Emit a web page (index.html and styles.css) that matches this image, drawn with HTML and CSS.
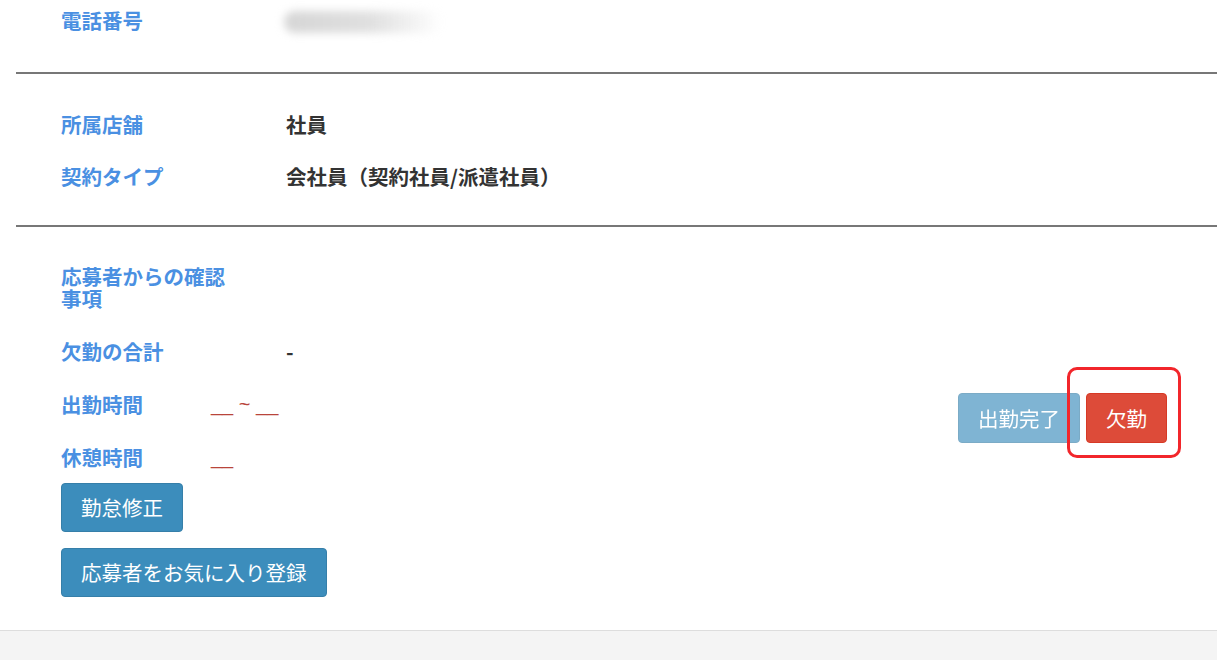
FILE: index.html
```html
<!DOCTYPE html>
<html lang="ja">
<head>
<meta charset="utf-8">
<title>応募者詳細</title>
<link rel="stylesheet" href="styles.css">
</head>
<body>
<div class="page">
  <section class="sec sec-top">
    <div class="row">
      <div class="lbl">電話番号</div>
      <div class="val"><span class="redacted"></span></div>
    </div>
  </section>
  <div class="divider"></div>
  <section class="sec sec-mid">
    <div class="row">
      <div class="lbl">所属店舗</div>
      <div class="val">社員</div>
    </div>
    <div class="row">
      <div class="lbl">契約タイプ</div>
      <div class="val">会社員（契約社員/派遣社員）</div>
    </div>
  </section>
  <div class="divider"></div>
  <section class="sec sec-bottom">
    <div class="col-left">
      <div class="row">
        <div class="lbl lbl-wrap">応募者からの確認事項</div>
        <div class="val"></div>
      </div>
      <div class="row">
        <div class="lbl">欠勤の合計</div>
        <div class="val">-</div>
      </div>
      <div class="row row-time">
        <div class="lbl">出勤時間</div>
        <div class="time">__ ~ __</div>
      </div>
      <div class="row row-time">
        <div class="lbl">休憩時間</div>
        <div class="time">__</div>
      </div>
      <div class="left-actions">
        <button class="btn btn-primary">勤怠修正</button>
        <button class="btn btn-primary">応募者をお気に入り登録</button>
      </div>
    </div>
    <div class="col-right">
      <button class="btn btn-primary btn-disabled">出勤完了</button>
      <div class="mark-wrap">
        <button class="btn btn-danger">欠勤</button>
        <span class="mark"></span>
      </div>
    </div>
  </section>
  <footer class="foot"></footer>
</div>
</body>
</html>
```

FILE: styles.css
```css
html, body {
  margin: 0;
  padding: 0;
  background: #ffffff;
}

body {
  font-family: "Noto Sans CJK JP", "Noto Sans", sans-serif;
  font-size: 20.5px;
  line-height: 22px;
  color: #333333;
  overflow: hidden;
}

.page {
  width: 1217px;
  height: 660px;
  display: flex;
  flex-direction: column;
}

.sec {
  padding-left: 61px;
}

.sec-top {
  padding-top: 9px;
  padding-bottom: 39px;
}

.sec-mid {
  padding-top: 39px;
  padding-bottom: 38px;
  display: flex;
  flex-direction: column;
  gap: 30px;
}

.divider {
  margin-left: 16px;
  height: 0;
  border-top: 2px solid #777777;
}

.row {
  display: grid;
  grid-template-columns: 225px 1fr;
  align-items: start;
}

.lbl {
  color: #4a90e2;
  font-weight: 700;
}

.lbl-wrap {
  max-width: 170px;
}

.val {
  font-weight: 700;
  color: #333333;
}

.redacted {
  display: inline-block;
  margin-left: -2px;
  margin-top: 2px;
  width: 158px;
  height: 22px;
  border-radius: 11px;
  background: linear-gradient(to right, #d6d6d6 0%, #e0e0e0 55%, rgba(240, 240, 240, 0) 100%);
  filter: blur(4px);
  vertical-align: top;
}

.sec-bottom {
  display: flex;
  justify-content: space-between;
  padding-top: 38px;
  padding-bottom: 33px;
  padding-right: 50px;
}

.col-left {
  display: flex;
  flex-direction: column;
  gap: 31px;
}

.row-time {
  grid-template-columns: 150px 1fr;
}

.time {
  font-family: "Liberation Sans", Arial, sans-serif;
  font-size: 20px;
  color: #b9453b;
  white-space: pre;
}

.left-actions {
  display: flex;
  flex-direction: column;
  align-items: flex-start;
  gap: 16px;
  margin-top: -16px;
}

.btn {
  font-family: "Noto Sans CJK JP", "Noto Sans", sans-serif;
  font-size: 20.5px;
  line-height: 47px;
  height: 49px;
  padding: 0 19px;
  border-radius: 4px;
  border: 1px solid transparent;
  color: #ffffff;
  font-weight: 400;
  cursor: pointer;
  margin: 0;
}

.btn-primary {
  background: #3c8dbc;
  border-color: #367fa9;
}

.btn-disabled {
  opacity: 0.65;
}

.btn-danger {
  background: #dd4b39;
  border-color: #d73925;
}

.col-right {
  display: flex;
  align-items: flex-start;
  gap: 6px;
  margin-top: 128px;
}

.col-right .btn {
  height: 50px;
  line-height: 48px;
}

.mark-wrap {
  position: relative;
}

.mark {
  position: absolute;
  left: -19px;
  top: -26px;
  width: 108px;
  height: 85px;
  border: 3px solid #f2262b;
  border-radius: 10px;
  pointer-events: none;
}

.foot {
  flex: 1;
  background: #f4f4f4;
  border-top: 1px solid #dddddd;
}
```
